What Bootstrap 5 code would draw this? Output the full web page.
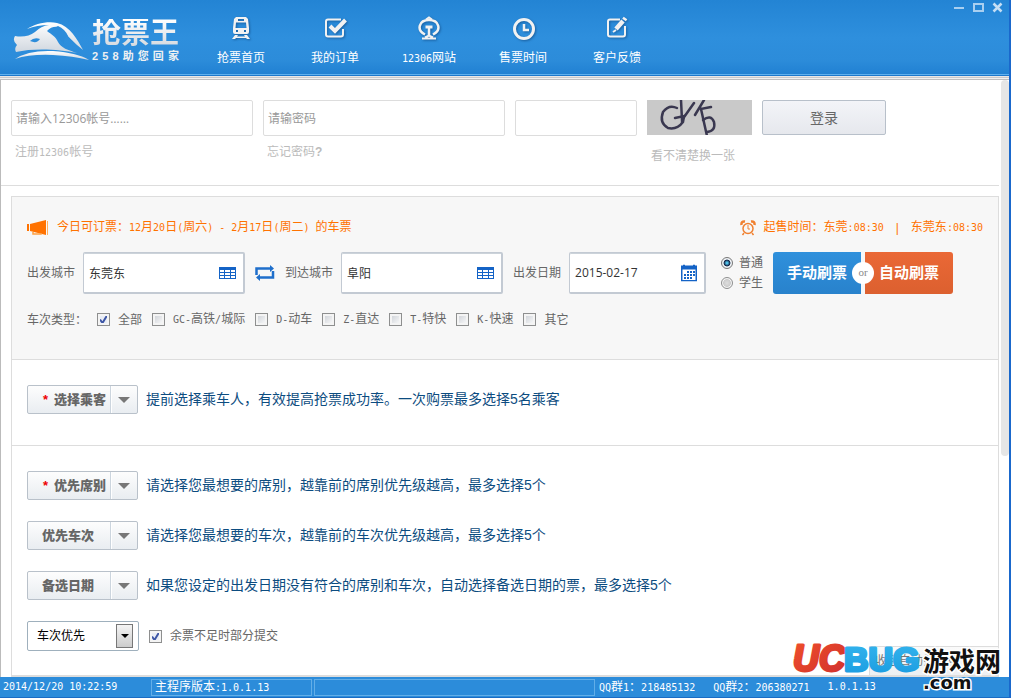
<!DOCTYPE html>
<html lang="zh-CN">
<head>
<meta charset="utf-8">
<meta name="viewport" content="width=device-width, initial-scale=1">
<title>抢票王</title>
<link rel="stylesheet" href="https://cdn.jsdelivr.net/npm/bootstrap@5.3.0/dist/css/bootstrap.min.css">
<style>
body{font-family:"Liberation Sans","Noto Sans CJK SC",sans-serif;font-size:12px;line-height:16px;color:#666;background:#fff}
a{text-decoration:none}
/* half-width latin characters inside Chinese text */
.hw{font-family:"DejaVu Sans Mono",monospace;font-size:10px;white-space:pre}
.app{border-right:2px solid #1a68cc}
.topbar{height:76px;background:linear-gradient(#2384d4,#2e8fdd 50%,#2c8cda 80%,#2080d2);border-bottom:1px solid #1c78cc;box-shadow:inset 0 -1px #5fb0ee;flex:none}
.rim{height:4px;background:linear-gradient(#e9e6e6 0 1px,#c9c9cc 1px 2px,#f0f0f0 2px 3px,#bdbdc0 3px);flex:none}
.logo{padding:19px 0 0 13px;width:194px;color:#eef0f2}
.logo-name{font-size:29px;line-height:29px;height:29px;font-weight:700;background:linear-gradient(#fff,#d3d8de);-webkit-background-clip:text;background-clip:text;color:transparent}
.logo-sub{font-size:11px;line-height:14px;font-weight:700;margin-top:1px}
.menu-item{width:94px;padding-top:16px;color:#fff}
.menu-item svg{display:block;margin:0 auto 10px;filter:drop-shadow(1px 1px 1px #1a5f9f)}
.winbtn{width:11px;height:11px;padding:0;border:0;background:none;display:flex}
.view{border-left:1px solid #bbb}
.login{padding:20px 10px 0;gap:10px;height:106px;border-bottom:1px solid #ddd}
.inp{display:block;border:1px solid #ddd;border-radius:2px;height:36px;padding:0 4px;width:100%;font-family:"Open Sans","Noto Sans CJK SC",sans-serif;font-size:12px;color:#555}
.inp::placeholder{color:#999}
.w-account{width:242px}.w-code{width:122px}.w-captcha{width:105px}
.hint{color:#bbb;display:inline-block;margin:8px 0 0 4px}
.hint.swap{margin-top:13px;white-space:nowrap}
.btn-login{width:124px;height:35px;border:1px solid #b8c0ca;border-radius:2px;background:linear-gradient(#f3f4f8,#e6e8ed);font-size:14px;color:#666;padding:0}
.panel-box{margin:10px 0 0 10px;border:1px solid #ddd;border-bottom-width:2px}
.query{background:#f7f7f7;border-bottom:1px solid #ddd;padding:22px 15px 31px;height:163px}
.orange{color:#ff7200}
.city{position:relative;width:162px}
.city.date{width:137px}
.city .inp{height:42px;border:1px solid #c3cad3;border-bottom-width:2px;border-right-width:2px;box-shadow:inset 0 1px #ccd3da;color:#333;padding-left:5px}
.city svg{position:absolute;right:9px;top:50%;transform:translateY(-50%)}
.form-check-input{margin:0;flex:none}
.tick{width:13px;height:13px;border:1px solid #8e8f8f;border-radius:0!important;background:linear-gradient(135deg,#c8ccd2,#fff);box-shadow:inset 0 0 0 2px #f4f4f4}
.tick:checked{border-color:#8e8f8f;background:#e8ecf4 url("data:image/svg+xml,%3Csvg xmlns='http://www.w3.org/2000/svg' viewBox='0 0 11 11'%3E%3Cpath d='M2 5.5l2.5 3.5L9 1.5' fill='none' stroke='%233c55a5' stroke-width='2'/%3E%3C/svg%3E") center/11px no-repeat}
.dot{width:12px;height:12px;border:1px solid #8e8f8f;background:radial-gradient(#ddd,#ccc 50%,#f4f4f4 60%)}
.dot:checked{border-color:#777;background:radial-gradient(circle at 50% 50%,#4fc0e8 0 12%,#124 42%,#eef2f5 54%)}
.go{position:relative;gap:4px}
.go button{width:88px;height:42px;border:0;color:#fff;font-size:15px;font-weight:700;padding:0}
.go .manual{background:linear-gradient(#2f90dc,#2882cc);border-radius:3px 0 0 3px}
.go .auto{background:linear-gradient(#ea6836,#dc602f);border-radius:0 3px 3px 0}
.go span{position:absolute;left:50%;top:50%;width:22px;height:22px;margin:-11px 0 0 -11px;border-radius:50%;background:#fff;color:#888;text-align:center;font:11px/20px "Liberation Serif",serif}
.opts{padding:25px 15px 31px}
.opts+.opts{border-top:1px solid #ddd}
.pick{width:111px;height:29px;border:1px solid #b9c1ca;border-radius:2px;background:linear-gradient(#fdfdfd,#e9edf1);font-size:13px;font-weight:700;color:#666;padding:0;display:flex;align-items:stretch}
.pick b{flex:1;display:flex;justify-content:flex-end;align-items:center;gap:6px;padding-right:16px;border-right:1px solid #ccd5de;box-shadow:1px 0 #fff}
.pick b.must{padding-right:4px}
.pick i{color:#e00;font-style:normal}
.pick .arr{width:26px;display:flex;align-items:center;justify-content:center}
.arr::after{content:"";border:6px solid transparent;border-top-color:#777;border-bottom:0}
.tip{font-size:14px;line-height:14px;color:#0c4c80;padding-bottom:2px}
.sel{position:relative;width:112px}
.sel select{appearance:none;width:100%;height:30px;border:1px solid #9fb0bd;border-radius:2px;padding:0 9px;color:#000;background:#fff;display:block}
.sel span{position:absolute;right:6px;top:3px;width:17px;height:24px;border:1px solid #777;background:linear-gradient(#f4f4f4,#ccc);display:flex;align-items:center;justify-content:center;pointer-events:none}
.sel span::after{content:"";border:4px solid transparent;border-top-color:#000;border-bottom:0}
.fold{position:absolute;right:0;bottom:0;width:129px;height:29px;border:1px solid #ddd;border-right:0;border-bottom:0;background:linear-gradient(#fafafa,#eceff2);color:#777;padding:0;display:flex;align-items:stretch}
.fold b{width:95px;font-weight:400;border-right:1px solid #ddd;line-height:28px}
.fold i{margin:auto;border:6px solid transparent;border-bottom-color:#666;border-top:0}
.scroll{width:8px;margin-left:2px}
.scroll div{height:63%;background:#e6e6e6;border-radius:4px}
.status{height:21px;background:#2c8cda;border-bottom:1px solid #1a6cc4;color:#fff;padding:2px 0 1px 3px;line-height:16px;flex:none}
.cell{border:1px solid #62aee8;padding-left:3px;line-height:15px}
.mark-site{position:absolute;right:4px;bottom:0;width:213px;height:60px;pointer-events:none}
</style>
</head>
<body>
<div class="app d-flex flex-column vh-100 position-relative overflow-hidden">
  <header class="topbar d-flex">
    <div class="logo d-flex">
      <svg width="76" height="42" viewBox="0 0 76 42" class="flex-shrink-0">
        <defs><linearGradient id="lg" x1="0" y1="0" x2="0" y2="1"><stop offset="0" stop-color="#fff"/><stop offset="1" stop-color="#cfd6de"/></linearGradient></defs>
        <path d="M14 10C22 5 34 2 44 4C57 7 64 20 70 31C61 24 53 15 46 8C42 7 37 8 34 12C38 15 43 18 45 23C48 29 55 31 64 34C46 30 20 29 3 33Q1 29 4 26Q-1 22 2 17Q14 19 22 13Q28 7 36 6Q24 6 14 10Z" fill="url(#lg)"/>
        <path d="M45 7Q52 10 55 17Q50 19 51 25Q45 19 39 12Q42 8 45 7Z" fill="#2c8cda"/>
        <path d="M17 22Q21 18 27 20Q24 25 17 22Z" fill="#2c8cda"/>
        <path d="M2 40Q15 31 40 32Q65 34 76 41Q60 37 40 36Q17 35 2 40Z" fill="url(#lg)"/>
      </svg>
      <div class="ps-1" style="margin-left:-1px">
        <div class="logo-name">抢票王</div>
        <div class="logo-sub d-flex justify-content-between"><span>2</span><span>5</span><span>8</span><span>助</span><span>您</span><span>回</span><span>家</span></div>
      </div>
    </div>
    <nav class="d-flex text-center">
      <a class="menu-item" href="#"><svg width="24" height="24" viewBox="0 0 24 24" fill="#f2f2f2"><path fill-rule="evenodd" d="M7 1h10l2 2 1 9v4q0 2-2 2H6q-2 0-2-2v-4l1-9zM9 3v2h6V3zM7 6.500L6.500 12h11L17 6.500zM7 14v2h2v-2zM15 14v2h2v-2z"/><path d="M6 19h3l-1 1.500h8L15 19h3l3 4h-3l-1-1H7l-1 1H3z"/></svg>抢票首页</a>
      <a class="menu-item" href="#"><svg width="24" height="24" viewBox="0 0 24 24" fill="none" stroke="#f2f2f2"><path d="M18 3.500H5q-2 0-2 2v13q0 2 2 2h13q2 0 2-2V13" stroke-width="2"/><path d="M7 10l5 5L22.500 4" stroke-width="4"/></svg>我的订单</a>
      <a class="menu-item" href="#"><svg width="24" height="24" viewBox="0 0 24 24" fill="none" stroke="#f2f2f2" style="transform:none"><path d="M8 18.500C-1 14 2 4 12 4S25 14 16 18.500" stroke-width="2.500"/><path d="M9 3.500l3-2 3 2" stroke-width="2"/><path d="M8.500 11h7" stroke-width="3"/><path d="M12 11v9" stroke-width="2.500"/><path d="M5 22.500h14M8 21.500l4-2 4 2" stroke-width="2"/></svg><span class="hw">12306</span>网站</a>
      <a class="menu-item" href="#"><svg width="24" height="24" viewBox="0 0 24 24" fill="none" stroke="#f2f2f2"><circle cx="13" cy="13" r="9.500" stroke-width="3"/><path d="M13 8v6h5" stroke-width="2.500"/></svg>售票时间</a>
      <a class="menu-item" href="#"><svg width="24" height="24" viewBox="0 0 24 24" fill="none" stroke="#f2f2f2"><path d="M15 3.500H5q-2 0-2 2v13q0 2 2 2h13q2 0 2-2V10" stroke-width="2"/><path d="M11 13l7-8" stroke-width="4.500"/><path d="M19 4l1.500-2" stroke-width="4.500"/><path d="M8 16l3-2" stroke-width="2"/></svg>客户反馈</a>
    </nav>
    <div class="ms-auto d-flex" style="gap:8px;padding:2px 6px 0 0">
      <button class="winbtn" aria-label="最小化"><svg width="11" height="11"><path d="M0 6h10" stroke="#a9cff0" stroke-width="2"/></svg></button>
      <button class="winbtn" aria-label="最大化"><svg width="11" height="11"><path d="M1 2h9v7H1z" fill="none" stroke="#a9cff0" stroke-width="2"/></svg></button>
      <button class="winbtn" aria-label="关闭"><svg width="11" height="11"><path d="M1.500 1.500l8 8M9.500 1.500l-8 8" stroke="#c4def5" stroke-width="2.500"/></svg></button>
    </div>
  </header>
  <div class="rim"></div>

  <div class="view d-flex flex-grow-1" style="min-height:0">
    <main class="flex-grow-1 d-flex flex-column">
      <form class="login d-flex">
        <div class="w-account"><input class="inp" aria-label="12306帐号" placeholder="请输入12306帐号……"><a class="hint" href="#">注册<span class="hw">12306</span>帐号</a></div>
        <div class="w-account"><input class="inp" type="password" aria-label="密码" placeholder="请输密码"><a class="hint" href="#">忘记密码<b>?</b></a></div>
        <div class="w-code"><input class="inp" aria-label="验证码"></div>
        <div class="w-captcha">
          <svg class="d-block" width="105" height="35" viewBox="0 0 105 35"><path d="M0 0h105v35H0z" fill="#c9c9c9"/><g fill="none" stroke="#3a3850" stroke-width="2.500" stroke-linecap="round"><path d="M30 8Q22 4 16 12Q12 23 21 28Q30 30 36 22L37 16L28 18"/><path d="M34 0L35 20L47 3"/><path d="M57 0L48 15M64 7L54 9L53 8M54 9L60 36"/><path d="M56 20Q64 14 67 22Q69 31 60 32"/></g></svg>
          <a class="hint swap" href="#">看不清楚换一张</a>
        </div>
        <button type="button" class="btn-login">登录</button>
      </form>

      <section class="panel-box flex-grow-1 position-relative">
        <form class="query">
          <div class="d-flex align-items-center orange">
            <svg width="22" height="16" viewBox="0 0 22 16" class="me-2"><path d="M3 4L19 0v15L3 11z" fill="#ff7200"/><path d="M0 4h2v7H0z" fill="#ff7200"/><path d="M20.500 1v14" stroke="#ffb060"/><path d="M6 12v2h8v-1" fill="none" stroke="#ffa040" stroke-width="1.500"/></svg>
            <span>今日可订票：<span class="hw">12</span>月<span class="hw">20</span>日<span class="hw">(</span>周六<span class="hw">) - 2</span>月<span class="hw">17</span>日<span class="hw">(</span>周二<span class="hw">) </span>的车票</span>
            <svg width="16" height="16" viewBox="0 0 16 16" class="ms-auto me-2" fill="none" stroke="#f08030"><circle cx="8" cy="8.500" r="5" stroke-width="1.500"/><path d="M8 5v4h2" /><path d="M1.500 5Q1 1 5 1.500M14.500 5Q15 1 11 1.500" stroke-width="2.500"/><path d="M4 13l-1.500 2M12 13l1.500 2" stroke-width="1.500"/></svg>
            <span>起售时间：东莞<span class="hw">:08:30</span></span><span class="px-2 mx-1">|</span><span>东莞东<span class="hw">:08:30</span></span>
          </div>
          <div class="d-flex align-items-center" style="margin-top:16px">
            <label for="from" class="me-2">出发城市</label>
            <div class="city"><input id="from" class="inp" value="东莞东"><svg width="17" height="12"><path d="M0 0h17v12H0z" fill="#1463c6"/><path d="M1 3h4v2H1zM6 3h5v2H6zM12 3h4v2h-4zM1 6h4v2H1zM6 6h5v2H6zM12 6h4v2h-4zM1 9h4v2H1zM6 9h5v2H6zM12 9h4v2h-4z" fill="#fff"/></svg></div>
            <svg width="20" height="16" viewBox="0 0 20 16" class="flex-shrink-0" style="margin:0 10px" fill="none" stroke="#1f6fcb" stroke-width="2.500"><path d="M1.500 10V3.500H16M18 6v6.500H4"/><path d="M15 0l4 3.500L15 7zM5 9l-4 3.500L5 16z" fill="#1f6fcb" stroke="none"/></svg>
            <label for="to" class="me-2">到达城市</label>
            <div class="city"><input id="to" class="inp" value="阜阳"><svg width="17" height="12"><path d="M0 0h17v12H0z" fill="#1463c6"/><path d="M1 3h4v2H1zM6 3h5v2H6zM12 3h4v2h-4zM1 6h4v2H1zM6 6h5v2H6zM12 6h4v2h-4zM1 9h4v2H1zM6 9h5v2H6zM12 9h4v2h-4z" fill="#fff"/></svg></div>
            <label for="day" class="me-2" style="margin-left:10px">出发日期</label>
            <div class="city date"><input id="day" class="inp" value="2015-02-17"><svg width="16" height="17"><path d="M0 1h16v16H0z" fill="#1463c6"/><path d="M1.500 5h13v10.500h-13z" fill="#fff"/><path d="M3 0v3M13 0v3" stroke="#1463c6" stroke-width="2"/><path d="M6 7.500h8M3 10.500h11M3 13.500h8" stroke="#1463c6" stroke-width="2" stroke-dasharray="2 1"/></svg></div>
            <div class="d-flex flex-column gap-1" style="margin-left:15px">
              <label class="d-flex align-items-center" style="gap:6px"><input class="form-check-input dot" type="radio" name="kind" checked>普通</label>
              <label class="d-flex align-items-center" style="gap:6px"><input class="form-check-input dot" type="radio" name="kind">学生</label>
            </div>
            <div class="go d-flex" style="margin-left:10px"><button type="button" class="manual">手动刷票</button><button type="button" class="auto">自动刷票</button><span>or</span></div>
          </div>
          <div class="d-flex align-items-center" style="margin-top:17px;gap:10px">
            <span>车次类型：</span>
            <label class="d-flex align-items-center"><input class="form-check-input tick me-2" type="checkbox" checked>全部</label>
            <label class="d-flex align-items-center"><input class="form-check-input tick me-2" type="checkbox"><span><span class="hw">GC-</span>高铁<span class="hw">/</span>城际</span></label>
            <label class="d-flex align-items-center"><input class="form-check-input tick me-2" type="checkbox"><span><span class="hw">D-</span>动车</span></label>
            <label class="d-flex align-items-center"><input class="form-check-input tick me-2" type="checkbox"><span><span class="hw">Z-</span>直达</span></label>
            <label class="d-flex align-items-center"><input class="form-check-input tick me-2" type="checkbox"><span><span class="hw">T-</span>特快</span></label>
            <label class="d-flex align-items-center"><input class="form-check-input tick me-2" type="checkbox"><span><span class="hw">K-</span>快速</span></label>
            <label class="d-flex align-items-center"><input class="form-check-input tick me-2" type="checkbox">其它</label>
          </div>
        </form>
        <div class="opts">
          <div class="d-flex align-items-center gap-2"><button class="pick"><b class="must"><i>*</i>选择乘客</b><span class="arr"></span></button><span class="tip">提前选择乘车人，有效提高抢票成功率。一次购票最多选择5名乘客</span></div>
        </div>
        <div class="opts d-flex flex-column pb-0" style="row-gap:21px">
          <div class="d-flex align-items-center gap-2"><button class="pick"><b class="must"><i>*</i>优先席别</b><span class="arr"></span></button><span class="tip">请选择您最想要的席别，越靠前的席别优先级越高，最多选择5个</span></div>
          <div class="d-flex align-items-center gap-2"><button class="pick"><b>优先车次</b><span class="arr"></span></button><span class="tip">请选择您最想要的车次，越靠前的车次优先级越高，最多选择5个</span></div>
          <div class="d-flex align-items-center gap-2"><button class="pick"><b>备选日期</b><span class="arr"></span></button><span class="tip">如果您设定的出发日期没有符合的席别和车次，自动选择备选日期的票，最多选择5个</span></div>
          <div class="d-flex align-items-center" style="gap:10px">
            <div class="sel"><select aria-label="优先方式"><option>车次优先</option></select><span></span></div>
            <label class="d-flex align-items-center"><input class="form-check-input tick me-2" type="checkbox" checked>余票不足时部分提交</label>
          </div>
        </div>
        <button class="fold"><b>收起自动筛选项</b><i></i></button>
      </section>
    </main>
    <div class="scroll"><div></div></div>
  </div>

  <footer class="status d-flex">
    <span style="width:148px" class="hw">2014/12/20 10:22:59</span>
    <span class="cell" style="width:161px">主程序版本<span class="hw">:1.0.1.13</span></span>
    <span class="cell flex-grow-1" style="margin-left:2px"></span>
    <span class="d-flex" style="width:414px;padding-left:4px;gap:18px"><span><span class="hw">QQ</span>群<span class="hw">1</span>：<span class="hw">218485132</span></span><span><span class="hw">QQ</span>群<span class="hw">2</span>：<span class="hw">206380271</span></span><span class="hw">1.0.1.13</span></span>
  </footer>

  <svg class="mark-site" viewBox="0 0 213 60">
    <defs>
      <linearGradient id="red" x1="0" y1="0" x2="1" y2="1"><stop offset="0" stop-color="#f0502a"/><stop offset="1" stop-color="#cf2f2f"/></linearGradient>
      <linearGradient id="blu" x1="0" y1="0" x2="0" y2="1"><stop offset="0" stop-color="#35b5ee"/><stop offset="1" stop-color="#1a9be0"/></linearGradient>
    </defs>
    <g font-family="Liberation Sans, sans-serif" font-weight="700" stroke-linejoin="round" stroke-width="3">
      <text x="1" y="33" font-size="36" font-style="italic" fill="url(#red)" stroke="url(#red)">UC</text>
      <text x="52" y="33" font-size="34" fill="url(#blu)" stroke="url(#blu)">BUG</text>
    </g>
    <g fill="#111" stroke="#fff" stroke-width="3" paint-order="stroke" font-weight="700">
      <text x="131" y="33" font-size="26" font-family="Noto Sans CJK SC, sans-serif">游戏网</text>
      <text x="131" y="51" font-size="18" font-family="DejaVu Sans, sans-serif">.com</text>
    </g>
  </svg>
</div>
<script src="https://cdn.jsdelivr.net/npm/bootstrap@5.3.0/dist/js/bootstrap.bundle.min.js"></script>
</body>
</html>
